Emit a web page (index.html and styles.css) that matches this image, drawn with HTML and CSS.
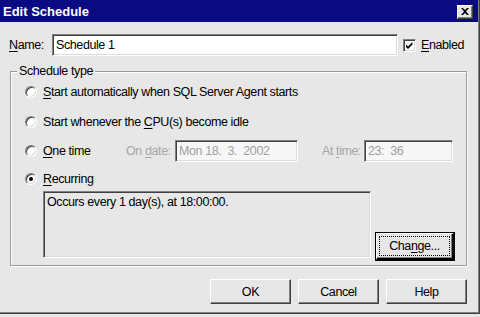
FILE: index.html
```html
<!DOCTYPE html>
<html>
<head>
<meta charset="utf-8">
<link rel="stylesheet" href="styles.css">
</head>
<body>
<div class="window">
  <div class="titlebar">
    <span class="title">Edit Schedule</span>
    <span class="close-btn">
      <svg width="8" height="7" viewBox="0 0 8 7"><path d="M0 0h2l2 2 2-2h2L5 3.5 8 7H6L4 5 2 7H0l3-3.5z" fill="#000"/></svg>
    </span>
  </div>
  <div class="name-row">
    <span class="name-label"><u>N</u>ame:</span>
    <span class="edit name-edit">Schedule 1</span>
    <span class="checkbox">
      <svg width="9" height="9" viewBox="0 0 9 9"><path d="M1 3.5 L3 5.5 L7.5 1 L7.5 3.5 L3 8 L1 6 Z" fill="#000"/></svg>
    </span>
    <span class="check-label"><u>E</u>nabled</span>
  </div>
  <fieldset class="group">
    <legend class="group-title">Schedule type</legend>
    <div class="group-body">
      <div class="radio-row row-1">
        <span class="radio"></span>
        <span class="radio-label"><u>S</u>tart automatically when SQL Server Agent starts</span>
      </div>
      <div class="radio-row row-2">
        <span class="radio"></span>
        <span class="radio-label">Start whenever the <u>C</u>PU(s) become idle</span>
      </div>
      <div class="radio-row row-3">
        <span class="radio"></span>
        <span class="radio-label one-time"><u>O</u>ne time</span>
        <span class="disabled-label date-label">On <u>d</u>ate:</span>
        <span class="edit disabled-edit date-edit">Mon 18.&nbsp; 3.&nbsp; 2002</span>
        <span class="disabled-label time-label">At <u>t</u>ime:</span>
        <span class="edit disabled-edit time-edit">23:&nbsp; 36</span>
      </div>
      <div class="radio-row row-4">
        <span class="radio checked"></span>
        <span class="radio-label"><u>R</u>ecurring</span>
      </div>
      <div class="recurring-row">
        <div class="recurring-box">Occurs every 1 day(s), at 18:00:00.</div>
        <span class="button default-btn"><span class="focus-rect">Cha<u>n</u>ge...</span></span>
      </div>
    </div>
  </fieldset>
  <div class="button-row">
    <span class="button dialog-btn">OK</span>
    <span class="button dialog-btn">Cancel</span>
    <span class="button dialog-btn">Help</span>
  </div>
</div>
</body>
</html>
```
FILE: styles.css
```css
html, body {
  margin: 0;
  padding: 0;
  background: #e7e7e7;
}

.window {
  width: 480px;
  height: 314px;
  box-sizing: border-box;
  background: #e7e7e7;
  border-bottom: 1px solid #404040;
  border-right: 1px solid #404040;
  box-shadow: inset -1px -1px 0 #808080;
  font-family: "Liberation Sans", Arial, sans-serif;
  font-size: 12.5px;
  letter-spacing: -0.4px;
  color: #000;
  display: flex;
  flex-direction: column;
  overflow: hidden;
}

u {
  text-decoration: underline;
  text-underline-offset: 2px;
}

.titlebar {
  height: 22px;
  flex: none;
  background: #0a0a82;
  margin-right: 1px;
  display: flex;
  align-items: center;
  justify-content: space-between;
  padding: 0 5px 0 3px;
}

.title {
  color: #fff;
  font-weight: bold;
  font-size: 13px;
  letter-spacing: 0;
}

.close-btn {
  width: 16px;
  height: 14px;
  box-sizing: border-box;
  background: #e7e7e7;
  border-top: 1px solid #fff;
  border-left: 1px solid #fff;
  border-right: 1px solid #404040;
  border-bottom: 1px solid #404040;
  box-shadow: inset -1px -1px 0 #808080;
  display: flex;
  align-items: center;
  justify-content: center;
  margin-top: 1px;
}

.close-btn svg {
  display: block;
  margin-top: -1px;
}

.name-row {
  margin-top: 12px;
  height: 22px;
  display: flex;
  align-items: center;
  padding-left: 9px;
  flex: none;
}

.name-label {
  width: 43px;
}

.edit {
  box-sizing: border-box;
  height: 22px;
  background: #fff;
  border-top: 1px solid #808080;
  border-left: 1px solid #808080;
  border-right: 1px solid #fff;
  border-bottom: 1px solid #fff;
  box-shadow: inset 1px 1px 0 #404040, inset -1px -1px 0 #dcdcdc;
  padding: 0 3px;
  display: flex;
  align-items: center;
  white-space: nowrap;
}

.name-edit {
  width: 346px;
}

.checkbox {
  margin-left: 5px;
  width: 13px;
  height: 13px;
  box-sizing: border-box;
  background: #fff;
  border-top: 1px solid #808080;
  border-left: 1px solid #808080;
  border-right: 1px solid #fff;
  border-bottom: 1px solid #fff;
  box-shadow: inset 1px 1px 0 #404040, inset -1px -1px 0 #dcdcdc;
  display: flex;
  align-items: center;
  justify-content: center;
}

.checkbox svg {
  display: block;
}

.check-label {
  margin-left: 5px;
}

.group {
  margin: 8px 0 0 10px;
  padding: 0;
  width: 457px;
  box-sizing: border-box;
  border: 1px solid #999;
  box-shadow: inset 1px 1px 0 #fff, 1px 1px 0 #fff;
  flex: none;
  min-width: 0;
}

.group-title {
  margin-left: 6px;
  padding: 0 2px;
  line-height: 14px;
  background: #e7e7e7;
}

.group-body {
  padding: 6px 0 7px 14px;
}

.radio-row {
  display: flex;
  align-items: center;
  height: 16px;
}

.row-2 {
  margin-top: 14px;
}

.row-3 {
  margin-top: 10px;
  height: 22px;
}

.row-4 {
  margin-top: 9px;
}

.radio {
  position: relative;
  width: 12px;
  height: 12px;
  box-sizing: border-box;
  border-radius: 50%;
  background: #fff;
  border-top: 1px solid #808080;
  border-left: 1px solid #808080;
  border-right: 1px solid #fff;
  border-bottom: 1px solid #fff;
  box-shadow: inset 1px 1px 0 #404040, inset -1px -1px 0 #dcdcdc;
  flex: none;
}

.radio.checked::after {
  content: "";
  position: absolute;
  left: 3px;
  top: 3px;
  width: 4px;
  height: 4px;
  border-radius: 50%;
  background: #000;
}

.radio-label {
  margin-left: 6px;
  white-space: nowrap;
}

.one-time {
  width: 83px;
}

.disabled-label {
  color: #a6a6a6;
  white-space: nowrap;
}

.date-label {
  width: 49px;
}

.time-label {
  margin-left: 24px;
  width: 42px;
}

.disabled-edit {
  background: #f7f7f7;
  color: #a0a0a0;
}

.date-edit {
  width: 123px;
}

.time-edit {
  width: 89px;
}

.recurring-row {
  margin-top: 4px;
  display: flex;
  align-items: flex-end;
}

.recurring-box {
  margin-left: 18px;
  width: 328px;
  height: 67px;
  box-sizing: border-box;
  border-top: 1px solid #808080;
  border-left: 1px solid #808080;
  border-right: 1px solid #fff;
  border-bottom: 1px solid #fff;
  box-shadow: inset 1px 1px 0 #404040, inset -1px -1px 0 #dcdcdc;
  padding: 3px 3px;
  line-height: 14px;
}

.button {
  box-sizing: border-box;
  background: #e7e7e7;
  border-top: 1px solid #fff;
  border-left: 1px solid #fff;
  border-right: 1px solid #404040;
  border-bottom: 1px solid #404040;
  box-shadow: inset -1px -1px 0 #808080;
  display: flex;
  align-items: center;
  justify-content: center;
  white-space: nowrap;
}

.default-btn {
  margin-left: 5px;
  margin-bottom: -2px;
  width: 78px;
  height: 27px;
  outline: 1px solid #000;
  outline-offset: 0;
  border-top-color: #fff;
  border-right: 2px solid #000;
  border-bottom: 2px solid #000;
  padding: 2px;
}

.focus-rect {
  flex: 1;
  align-self: stretch;
  display: flex;
  align-items: center;
  justify-content: center;
  border: 1px dotted #000;
}

.button-row {
  margin-top: 13px;
  display: flex;
  justify-content: flex-end;
  gap: 7px;
  padding-right: 12px;
  flex: none;
}

.dialog-btn {
  width: 81px;
  height: 25px;
}
```
